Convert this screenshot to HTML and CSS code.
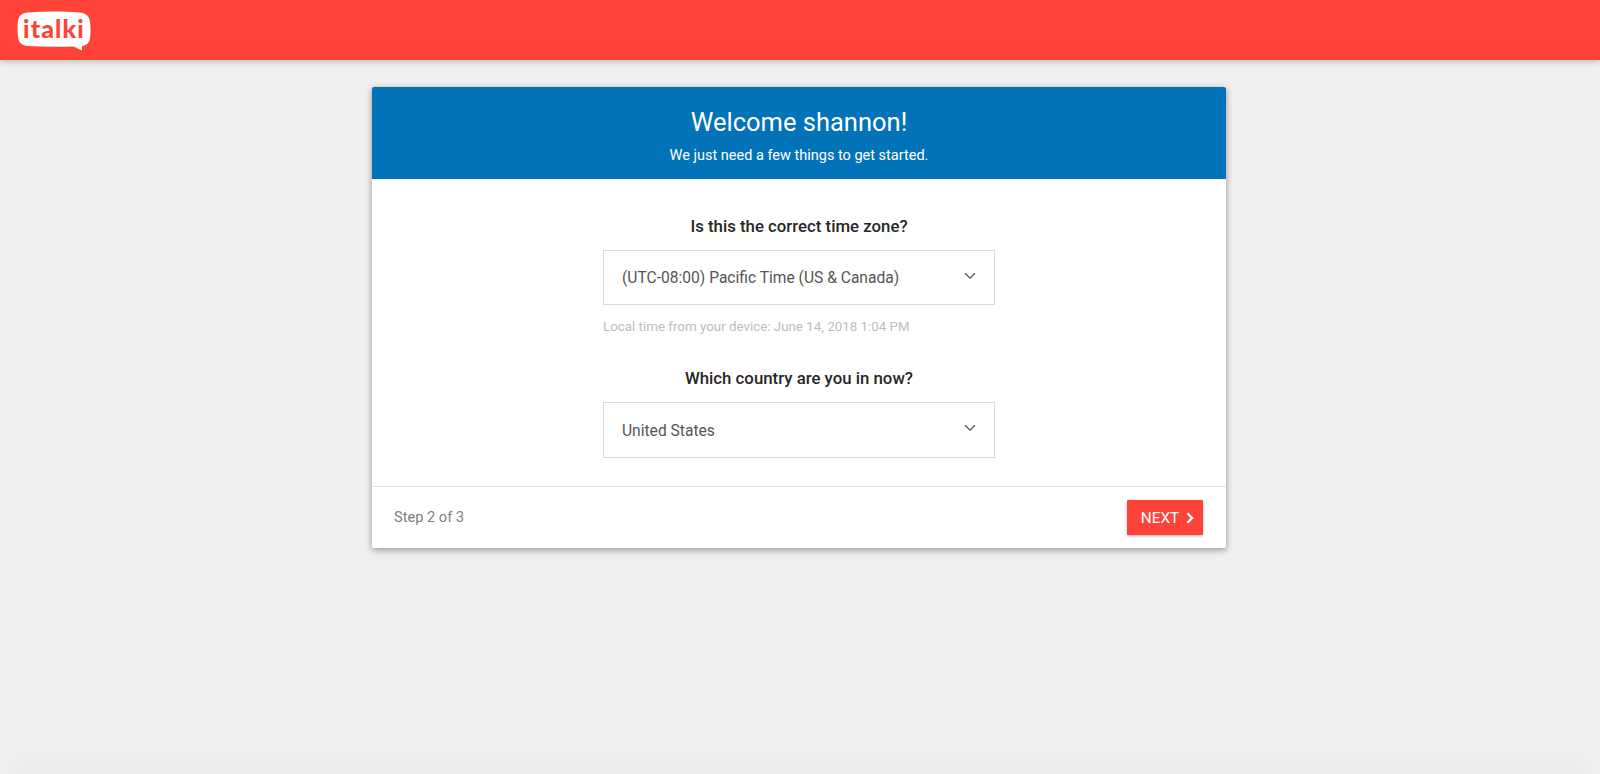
FILE: index.html
```html
<!DOCTYPE html>
<html lang="en">
<head>
<meta charset="utf-8">
<title>italki</title>
<link rel="stylesheet" href="styles.css">
</head>
<body>
<div class="page">
  <header class="topbar">
    <div class="logo">
      <svg class="logo-bubble" width="74" height="40" viewBox="0 0 74 40" aria-hidden="true">
        <path d="M11 1.5 C28 0.3 46 0.3 62 1.5 C69 2 72.5 5 73 11 C73.8 17 73.8 22 73 27 C72.5 32 69.5 34.5 65 35 L65 39.5 C62.5 38.5 60 37 56.5 35.4 C42 36 26 36 11 35 C5 34.5 1.6 32 1 26 C0.4 20 0.4 15 1 10 C1.6 5 5 2 11 1.5 Z" fill="#fff"/>
      </svg>
      <span class="logo-text">italki</span>
    </div>
  </header>
  <main class="content">
    <section class="card">
      <div class="card-head">
        <h1 class="title">Welcome shannon!</h1>
        <p class="subtitle">We just need a few things to get started.</p>
      </div>
      <div class="card-body">
        <div class="field">
          <h2 class="question">Is this the correct time zone?</h2>
          <div class="select">
            <span>(UTC-08:00) Pacific Time (US &amp; Canada)</span>
            <svg class="chev" width="12" height="8" viewBox="0 0 12 8" aria-hidden="true"><path d="M1 1.2 L6 6.2 L11 1.2" fill="none" stroke="#555" stroke-width="1.3"/></svg>
          </div>
          <p class="hint">Local time from your device: June 14, 2018 1:04 PM</p>
        </div>
        <div class="field field-second">
          <h2 class="question">Which country are you in now?</h2>
          <div class="select">
            <span>United States</span>
            <svg class="chev" width="12" height="8" viewBox="0 0 12 8" aria-hidden="true"><path d="M1 1.2 L6 6.2 L11 1.2" fill="none" stroke="#555" stroke-width="1.3"/></svg>
          </div>
        </div>
      </div>
      <div class="card-foot">
        <span class="step">Step 2 of 3</span>
        <button class="next" type="button">NEXT
          <svg width="8" height="12" viewBox="0 0 8 12" aria-hidden="true"><path d="M1.5 1.2 L6 6 L1.5 10.8" fill="none" stroke="#fff" stroke-width="2.4"/></svg>
        </button>
      </div>
    </section>
  </main>
  <div class="page-bottom"></div>
</div>
</body>
</html>
```
FILE: styles.css
```css
* { box-sizing: border-box; }
html, body { margin: 0; padding: 0; }
body {
  background: #f0f0f0;
  font-family: Roboto, "Liberation Sans", sans-serif;
  color: #262626;
}
.page {
  height: 100vh;
  overflow: hidden;
  display: flex;
  flex-direction: column;
}
.topbar {
  flex: none;
  height: 60px;
  background: #ff4338;
  box-shadow: 0 2px 6px rgba(0, 0, 0, .22);
  padding: 11px 0 0 17px;
  position: relative;
}
.logo {
  position: relative;
  width: 74px;
  height: 40px;
}
.logo-bubble { display: block; }
.logo-text {
  position: absolute;
  left: 6px;
  top: 2px;
  width: 62px;
  text-align: center;
  font-family: Lato, sans-serif;
  font-weight: 900;
  font-size: 25px;
  line-height: 31px;
  letter-spacing: 1.1px;
  color: #ff4338;
}
.content {
  flex: 1;
  min-height: 0;
  padding: 27px 2px 0 0;
  display: flex;
  justify-content: center;
  align-items: flex-start;
}
.card {
  width: 854px;
  background: #fff;
  border-radius: 2px;
  box-shadow: 0 2px 7px rgba(0, 0, 0, .4);
}
.card-head {
  height: 92px;
  background: #0273b8;
  border-radius: 2px 2px 0 0;
  color: #fff;
  text-align: center;
  padding-top: 19px;
}
.title {
  margin: 0;
  font-size: 25.5px;
  font-weight: 400;
  line-height: 32px;
}
.subtitle {
  margin: 9px 0 0;
  font-size: 14.5px;
  line-height: 18px;
}
.card-body {
  height: 307px;
  padding-top: 37px;
  display: flex;
  flex-direction: column;
  align-items: center;
}
.field { width: 392px; }
.field-second { margin-top: 33px; }
.question {
  margin: 0 0 14px;
  font-size: 16.8px;
  font-weight: 500;
  line-height: 20px;
  text-align: center;
}
.select {
  height: 55px;
  border: 1px solid #dadada;
  padding: 0 18px;
  display: flex;
  align-items: center;
  justify-content: space-between;
  font-size: 15.6px;
  color: #555;
}
.field-second .select { height: 56px; }
.field-second .select span { margin-top: 1px; }
.chev { margin-top: -4px; }
.hint {
  margin: 14px 0 0;
  font-size: 13.35px;
  line-height: 16px;
  color: #bdbdbd;
}
.card-foot {
  height: 62px;
  border-top: 1px solid #e2e2e2;
  padding: 0 23px 0 22px;
  display: flex;
  align-items: center;
  justify-content: space-between;
}
.step {
  margin-bottom: 2px;
  font-size: 14.6px;
  color: #808080;
}
.next {
  width: 76px;
  height: 35px;
  border: 0;
  border-radius: 1px;
  padding: 0 0 0 5px;
  background: #ff4338;
  color: #fff;
  font-family: inherit;
  font-size: 15.4px;
  box-shadow: 0 1px 3px rgba(0, 0, 0, .3);
  display: flex;
  align-items: center;
  justify-content: center;
  gap: 7px;
}
.page-bottom {
  flex: none;
  height: 0;
  margin: 0 24px;
  box-shadow: 0 0 26px 10px rgba(0, 0, 0, .04);
}
```
